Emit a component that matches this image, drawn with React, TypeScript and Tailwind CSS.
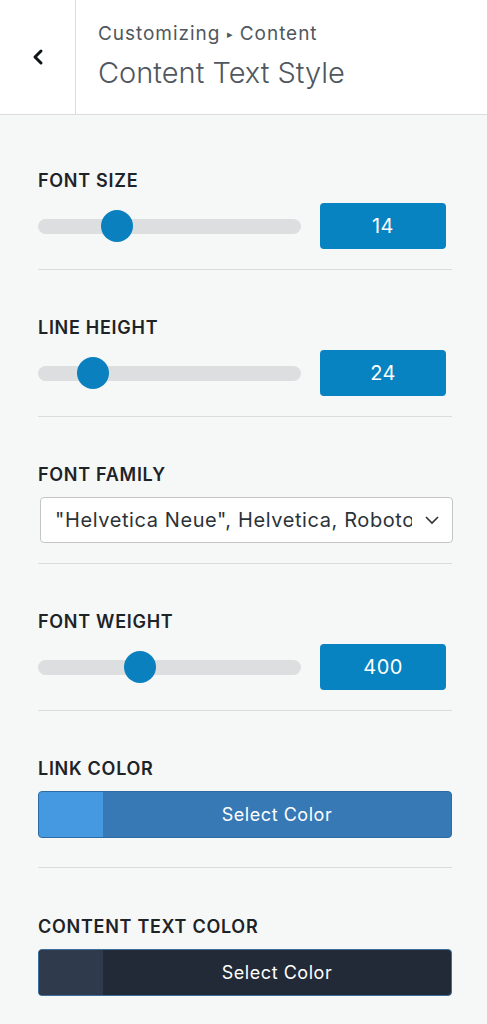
import { useState } from "react";

const font = { fontFamily: "Inter, 'Liberation Sans', sans-serif" };

const Label = ({ children }: { children: string }) => (
  <div className="h-[20px] text-[18px] font-semibold leading-[20px] tracking-[0.04em] text-[#1d2327] uppercase mb-[13px] pt-[1px]">
    {children}
  </div>
);

const SliderRow = ({ value, pos }: { value: number; pos: number }) => (
  <div className="flex items-center h-[46px]">
    <div className="relative w-[263px] h-[15px] rounded-full bg-[#dcdee0]">
      <div
        className="absolute top-1/2 w-[32px] h-[32px] -mt-[16px] -ml-[16px] rounded-full bg-[#0a80bf]"
        style={{ left: pos }}
      />
    </div>
    <div className="ml-[19px] w-[126px] h-[46px] rounded-[4px] bg-[#0883c1] flex items-center justify-center text-white text-[20px] tracking-[0.02em]">
      {value}
    </div>
  </div>
);

const ColorButton = ({ swatch, bg, border }: { swatch: string; bg: string; border: string }) => (
  <button className={`flex w-[414px] h-[47px] rounded-[4px] overflow-hidden border ${border} ${bg}`}>
    <span className={`w-[64px] h-full ${swatch}`} />
    <span className="flex-1 flex items-center justify-center text-white text-[18px] tracking-[0.03em]">
      Select Color
    </span>
  </button>
);

export default function App() {
  const [family] = useState('"Helvetica Neue", Helvetica, Roboto, Arial, sans-serif');

  return (
    <div className="min-h-screen bg-[#f6f7f7]" style={font}>
      <header className="flex h-[115px] bg-white border-b border-[#dcdcde]">
        <button className="w-[76px] flex items-center justify-center border-r border-[#dcdcde]">
          <svg width="14" height="20" viewBox="0 0 14 20" fill="none">
            <polyline points="10,4 4,10 10,16" stroke="#101517" strokeWidth="3" strokeLinecap="round" strokeLinejoin="round" />
          </svg>
        </button>
        <div className="pl-[22px] pt-[21px]">
          <div className="text-[19px] leading-[26px] tracking-[0.05em] text-[#50575e]">
            Customizing <span className="text-[11px] align-[2px]">▸</span> Content
          </div>
          <h1 className="mt-[8px] text-[29px] leading-[36px] font-light text-[#50575e]">Content Text Style</h1>
        </div>
      </header>

      <main className="px-[38px] pt-[8px]">
        <section className="pt-[47px] pb-[20px] border-b border-[#dcdcde] w-[414px]">
          <Label>Font Size</Label>
          <SliderRow value={14} pos={79} />
        </section>

        <section className="pt-[47px] pb-[20px] border-b border-[#dcdcde] w-[414px]">
          <Label>Line Height</Label>
          <SliderRow value={24} pos={55} />
        </section>

        <section className="pt-[47px] pb-[20px] border-b border-[#dcdcde] w-[414px]">
          <Label>Font Family</Label>
          <div className="ml-[2px] flex items-center w-[413px] h-[46px] rounded-[4px] border border-[#c3c4c7] bg-white">
            <span className="flex-1 pl-[14px] overflow-hidden whitespace-nowrap text-[20px] tracking-[0.03em] text-[#2c3338]">
              {family}
            </span>
            <svg className="mx-[12px] shrink-0" width="16" height="16" viewBox="0 0 16 16" fill="none">
              <polyline points="2,5 8,11 14,5" stroke="#2c3338" strokeWidth="1.6" />
            </svg>
          </div>
        </section>

        <section className="pt-[47px] pb-[20px] border-b border-[#dcdcde] w-[414px]">
          <Label>Font Weight</Label>
          <SliderRow value={400} pos={102} />
        </section>

        <section className="pt-[47px] pb-[29px] border-b border-[#dcdcde] w-[414px]">
          <Label>Link Color</Label>
          <ColorButton swatch="bg-[#4499e0]" bg="bg-[#3679b5]" border="border-[#2d6ba3]" />
        </section>

        <section className="pt-[48px] pb-[28px] w-[414px]">
          <Label>Content Text Color</Label>
          <ColorButton swatch="bg-[#2f3a4c]" bg="bg-[#232a37]" border="border-[#3d6f9c]" />
        </section>
      </main>
    </div>
  );
}
